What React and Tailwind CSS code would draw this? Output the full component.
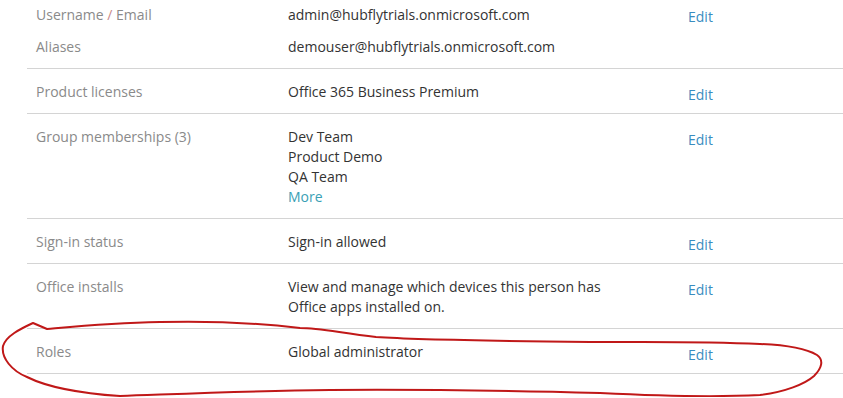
import React from 'react'

const rows = [
    { label: 'Product licenses', values: ['Office 365 Business Premium'], edit: true },
    { label: 'Group memberships (3)', values: ['Dev Team', 'Product Demo', 'QA Team'], more: true, edit: true },
    { label: 'Sign-in status', values: ['Sign-in allowed'], edit: true },
    { label: 'Office installs', values: ['View and manage which devices this person has', 'Office apps installed on.'], edit: true },
    { label: 'Roles', values: ['Global administrator'], edit: true },
]

const Row = ({ label, values, more, edit }) => (
    <div className="flex items-start border-t border-[#d4d4d4] pt-[13px] pb-[11px] text-[14px] leading-[20px]">
        <div className="w-[261px] pl-[9px] text-[#8a8a8a]">{label}</div>
        <div className="w-[400px] text-[#333333]">
            {values.map((v) => (
                <div key={v}>{v}</div>
            ))}
            {more && <div className="text-[#3a9fb5]">More</div>}
        </div>
        <div className="mt-[3px] h-[17px] text-[#3a8cbf]">{edit && 'Edit'}</div>
    </div>
)

const App = () => {
    return (
        <div className="relative w-[843px] h-[398px] overflow-hidden bg-white font-['Open_Sans','Noto_Sans',sans-serif]">
            <div className="ml-[27px] border-b border-[#d4d4d4]">
                <div className="pt-[5px] pb-[11px] text-[14px] leading-[20px]">
                    <div className="flex items-start">
                        <div className="w-[261px] pl-[9px] text-[#8a8a8a]">
                            Username <span className="text-[#c98a8a]">/</span> Email
                        </div>
                        <div className="w-[400px] text-[#333333]">admin@hubflytrials.onmicrosoft.com</div>
                        <div className="mt-[2px] h-[18px] text-[#3a8cbf]">Edit</div>
                    </div>
                    <div className="flex mt-[12px]">
                        <div className="w-[261px] pl-[9px] text-[#8a8a8a]">Aliases</div>
                        <div className="w-[400px] text-[#333333]">demouser@hubflytrials.onmicrosoft.com</div>
                    </div>
                </div>
                {rows.map((r) => (
                    <Row key={r.label} {...r} />
                ))}
            </div>
            {/* hand drawn red outline round the Roles row */}
            <svg className="absolute left-0 top-0 pointer-events-none" width="843" height="398" viewBox="0 0 843 398">
                <path
                    d="M 47 329 L 33 323 C 20 329 6 336 3 346 C 1 358 12 371 27 377 C 45 386 75 393 120 396 C 180 394 250 391 330 390 C 430 389 520 391 600 393 C 660 396 720 397 760 395 C 785 392 805 384 814 376 C 822 368 824 360 817 355 C 805 348 785 345 760 344 C 700 341 640 342 590 342 C 500 341 420 340 376 337 C 340 333 320 328 300 328 C 250 322 200 321 160 322 C 110 323 70 327 47 329"
                    fill="none"
                    stroke="#c01818"
                    strokeWidth="2"
                    strokeLinejoin="round"
                    strokeLinecap="round"
                />
            </svg>
        </div>
    )
}

export default App
